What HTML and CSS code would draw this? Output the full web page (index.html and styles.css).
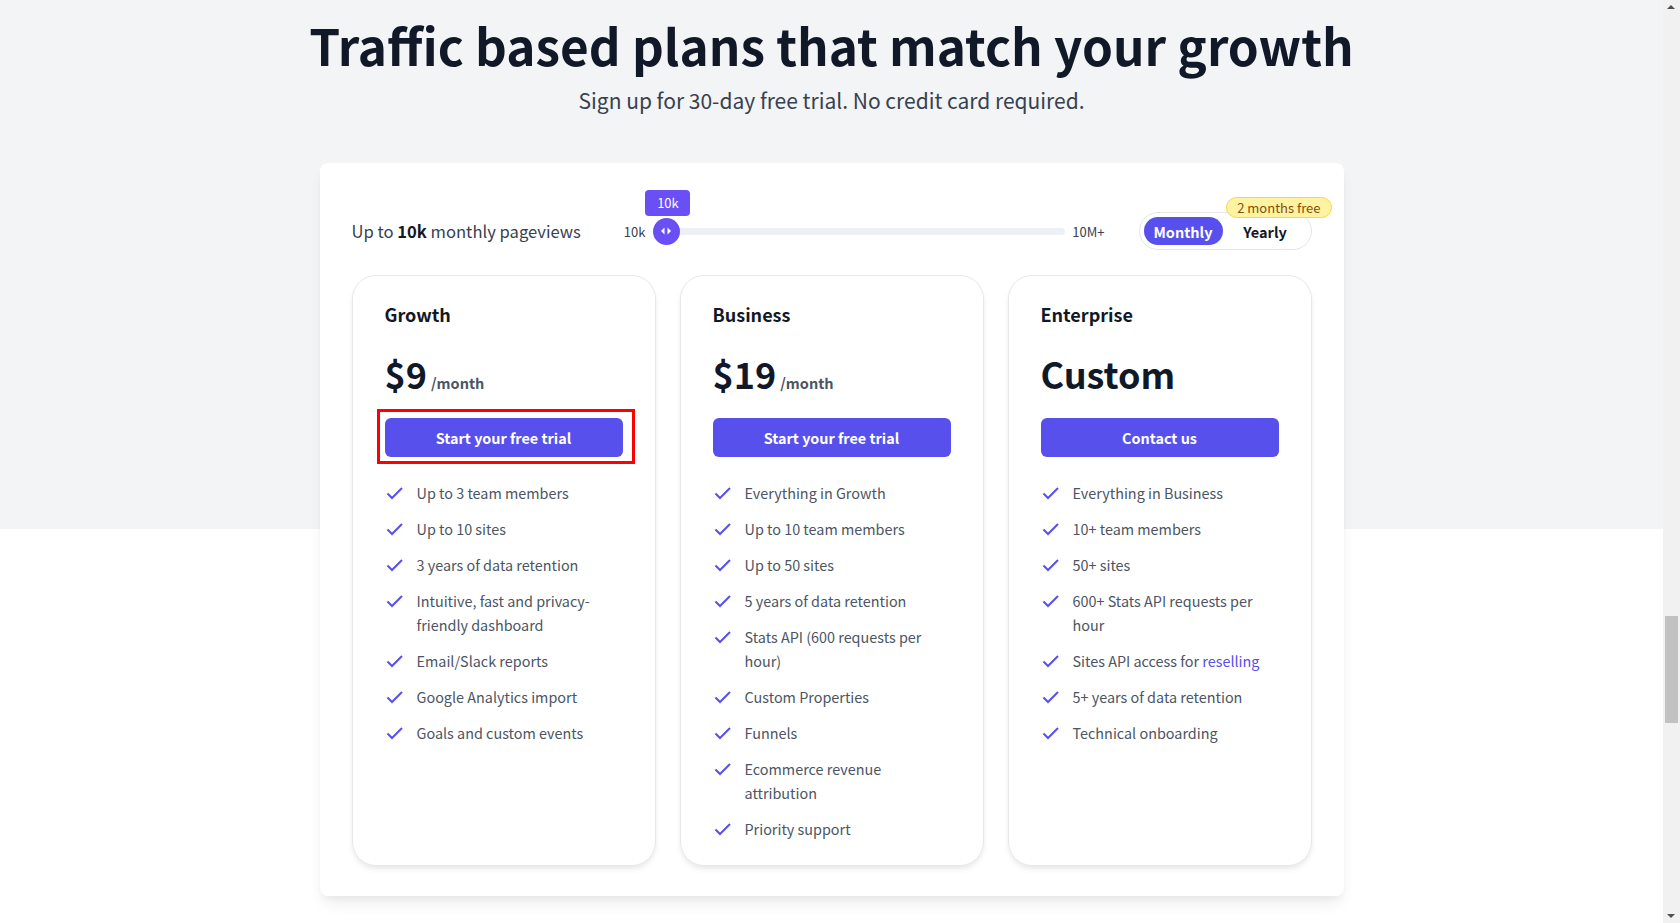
FILE: index.html
```html
<!DOCTYPE html>
<html lang="en">
<head>
    <meta charset="UTF-8">
    <meta name="viewport" content="width=device-width, initial-scale=1.0">
    <title>Pricing</title>
    <link rel="stylesheet" href="styles.css">
</head>
<body>
    <div class="page">
        <div class="hero">
            <h1>Traffic based plans that match your growth</h1>
            <p class="subtitle">Sign up for 30-day free trial. No credit card required.</p>
        </div>

        <div class="pricing">
            <!-- Pageviews slider and billing toggle -->
            <div class="controls">
                <div class="pageviews">Up to <b>10k</b> monthly pageviews</div>
                <div class="slider">
                    <span class="slider-label">10k</span>
                    <div class="track">
                        <div class="tooltip">10k</div>
                        <div class="thumb">
                            <svg width="26" height="26" viewBox="0 0 26 26">
                                <polygon points="8,13 11.5,9.5 11.5,16.5" fill="#fff"/>
                                <polygon points="14.5,9.5 18,13 14.5,16.5" fill="#fff"/>
                            </svg>
                        </div>
                    </div>
                    <span class="slider-label">10M+</span>
                </div>
                <div class="toggle">
                    <span class="badge">2 months free</span>
                    <button class="toggle-option active">Monthly</button>
                    <button class="toggle-option">Yearly</button>
                </div>
            </div>

            <div class="plans">
                <div class="plan">
                    <h3>Growth</h3>
                    <div class="price"><span class="amount">$9</span><span class="period">/month</span></div>
                    <div class="cta highlighted">
                        <button class="plan-button">Start your free trial</button>
                    </div>
                    <ul class="features">
                        <li><svg class="check" viewBox="0 0 20 20"><path d="M2.5 10.5l4.5 4.5L17 5"/></svg><span>Up to 3 team members</span></li>
                        <li><svg class="check" viewBox="0 0 20 20"><path d="M2.5 10.5l4.5 4.5L17 5"/></svg><span>Up to 10 sites</span></li>
                        <li><svg class="check" viewBox="0 0 20 20"><path d="M2.5 10.5l4.5 4.5L17 5"/></svg><span>3 years of data retention</span></li>
                        <li><svg class="check" viewBox="0 0 20 20"><path d="M2.5 10.5l4.5 4.5L17 5"/></svg><span>Intuitive, fast and privacy-friendly dashboard</span></li>
                        <li><svg class="check" viewBox="0 0 20 20"><path d="M2.5 10.5l4.5 4.5L17 5"/></svg><span>Email/Slack reports</span></li>
                        <li><svg class="check" viewBox="0 0 20 20"><path d="M2.5 10.5l4.5 4.5L17 5"/></svg><span>Google Analytics import</span></li>
                        <li><svg class="check" viewBox="0 0 20 20"><path d="M2.5 10.5l4.5 4.5L17 5"/></svg><span>Goals and custom events</span></li>
                    </ul>
                </div>

                <div class="plan">
                    <h3>Business</h3>
                    <div class="price"><span class="amount">$19</span><span class="period">/month</span></div>
                    <div class="cta">
                        <button class="plan-button">Start your free trial</button>
                    </div>
                    <ul class="features">
                        <li><svg class="check" viewBox="0 0 20 20"><path d="M2.5 10.5l4.5 4.5L17 5"/></svg><span>Everything in Growth</span></li>
                        <li><svg class="check" viewBox="0 0 20 20"><path d="M2.5 10.5l4.5 4.5L17 5"/></svg><span>Up to 10 team members</span></li>
                        <li><svg class="check" viewBox="0 0 20 20"><path d="M2.5 10.5l4.5 4.5L17 5"/></svg><span>Up to 50 sites</span></li>
                        <li><svg class="check" viewBox="0 0 20 20"><path d="M2.5 10.5l4.5 4.5L17 5"/></svg><span>5 years of data retention</span></li>
                        <li><svg class="check" viewBox="0 0 20 20"><path d="M2.5 10.5l4.5 4.5L17 5"/></svg><span>Stats API (600 requests per hour)</span></li>
                        <li><svg class="check" viewBox="0 0 20 20"><path d="M2.5 10.5l4.5 4.5L17 5"/></svg><span>Custom Properties</span></li>
                        <li><svg class="check" viewBox="0 0 20 20"><path d="M2.5 10.5l4.5 4.5L17 5"/></svg><span>Funnels</span></li>
                        <li><svg class="check" viewBox="0 0 20 20"><path d="M2.5 10.5l4.5 4.5L17 5"/></svg><span>Ecommerce revenue attribution</span></li>
                        <li><svg class="check" viewBox="0 0 20 20"><path d="M2.5 10.5l4.5 4.5L17 5"/></svg><span>Priority support</span></li>
                    </ul>
                </div>

                <div class="plan">
                    <h3>Enterprise</h3>
                    <div class="price"><span class="amount">Custom</span></div>
                    <div class="cta">
                        <button class="plan-button">Contact us</button>
                    </div>
                    <ul class="features">
                        <li><svg class="check" viewBox="0 0 20 20"><path d="M2.5 10.5l4.5 4.5L17 5"/></svg><span>Everything in Business</span></li>
                        <li><svg class="check" viewBox="0 0 20 20"><path d="M2.5 10.5l4.5 4.5L17 5"/></svg><span>10+ team members</span></li>
                        <li><svg class="check" viewBox="0 0 20 20"><path d="M2.5 10.5l4.5 4.5L17 5"/></svg><span>50+ sites</span></li>
                        <li><svg class="check" viewBox="0 0 20 20"><path d="M2.5 10.5l4.5 4.5L17 5"/></svg><span>600+ Stats API requests per hour</span></li>
                        <li><svg class="check" viewBox="0 0 20 20"><path d="M2.5 10.5l4.5 4.5L17 5"/></svg><span>Sites API access for <a href="#">reselling</a></span></li>
                        <li><svg class="check" viewBox="0 0 20 20"><path d="M2.5 10.5l4.5 4.5L17 5"/></svg><span>5+ years of data retention</span></li>
                        <li><svg class="check" viewBox="0 0 20 20"><path d="M2.5 10.5l4.5 4.5L17 5"/></svg><span>Technical onboarding</span></li>
                    </ul>
                </div>
            </div>
        </div>
    </div>

    <!-- Window scrollbar -->
    <div class="scrollbar">
        <span class="arrow up"></span>
        <div class="scroll-thumb"></div>
        <span class="arrow down"></span>
    </div>
</body>
</html>
```

FILE: styles.css
```css
body {
    margin: 0;
    background-color: #ffffff;
    font-family: "Noto Sans CJK SC", "Noto Sans", sans-serif;
    color: #111827;
    overflow: hidden;
}
.page {
    width: calc(100% - 17px);
    height: 100vh;
    background: linear-gradient(#f3f4f6 529px, #ffffff 529px);
}
.hero {
    text-align: center;
    padding-top: 15px;
}
.hero h1 {
    margin: 0;
    font-size: 49.5px;
    line-height: 60px;
    font-weight: 700;
    color: #111827;
}
.subtitle {
    margin: 11px 0 0;
    font-size: 21px;
    line-height: 28px;
    color: #374151;
}
.pricing {
    width: 1024px;
    box-sizing: border-box;
    margin: 49px auto 0;
    padding: 49px 32px 30px;
    background-color: #ffffff;
    border-radius: 8px;
    box-shadow: 0 10px 15px -3px rgba(0, 0, 0, 0.08), 0 4px 6px -2px rgba(0, 0, 0, 0.04);
}
.controls {
    display: flex;
    align-items: center;
    height: 38px;
}
.pageviews {
    font-size: 16.6px;
    color: #374151;
}
.pageviews b {
    color: #111827;
}
.slider {
    flex: 1;
    display: flex;
    align-items: center;
    margin: 0 34px 0 43px;
}
.slider-label {
    font-size: 13px;
    color: #374151;
}
.track {
    flex: 1;
    position: relative;
    height: 7px;
    margin: 0 7px 0 9px;
    background-color: #edf0f4;
    border-radius: 4px;
}
.thumb {
    position: absolute;
    left: -1px;
    top: -10px;
    width: 27px;
    height: 27px;
    border-radius: 50%;
    background-color: #6a4ff5;
}
.thumb svg {
    display: block;
}
.tooltip {
    position: absolute;
    left: -9px;
    bottom: 19px;
    width: 45px;
    height: 26px;
    line-height: 26px;
    text-align: center;
    font-size: 13px;
    color: #ffffff;
    background-color: #6a4ff5;
    border-radius: 4px;
}
.toggle {
    position: relative;
    display: flex;
    height: 38px;
    box-sizing: border-box;
    padding: 4px 3px 4px 4px;
    border: 1px solid #e5e7eb;
    border-radius: 999px;
    background-color: #ffffff;
}
.toggle-option {
    width: 85px;
    border: none;
    background: none;
    padding: 0;
    font-family: inherit;
    font-size: 14.5px;
    font-weight: 700;
    color: #111827;
    border-radius: 999px;
}
.toggle-option.active {
    width: 79px;
    background-color: #5850ec;
    color: #ffffff;
}
.badge {
    position: absolute;
    top: -16px;
    right: -21px;
    padding: 0 10px;
    height: 21px;
    line-height: 19px;
    box-sizing: border-box;
    font-size: 13px;
    color: #854d0e;
    background-color: #fef3a0;
    border: 1px solid #fcd34d;
    border-radius: 999px;
}
.plans {
    display: grid;
    grid-template-columns: repeat(3, 1fr);
    gap: 24px;
    margin-top: 25px;
}
.plan {
    padding: 24px 32px;
    border: 1px solid #e5e7eb;
    border-radius: 24px;
    box-shadow: 0 4px 6px -1px rgba(0, 0, 0, 0.08), 0 2px 4px -1px rgba(0, 0, 0, 0.04);
}
.plan h3 {
    margin: 0;
    font-size: 18px;
    line-height: 28px;
    font-weight: 700;
}
.price {
    display: flex;
    align-items: baseline;
    margin-top: 25px;
    height: 40px;
}
.amount {
    font-size: 36px;
    line-height: 40px;
    font-weight: 700;
}
.period {
    margin-left: 4px;
    font-size: 14.5px;
    font-weight: 700;
    color: #4b5563;
}
.cta {
    position: relative;
    margin-top: 25px;
}
.cta.highlighted::after {
    content: "";
    position: absolute;
    top: -9px;
    left: -8px;
    right: -12px;
    bottom: -7px;
    border: 3px solid #ff0000;
}
.plan-button {
    display: block;
    width: 100%;
    height: 39px;
    border: none;
    border-radius: 6px;
    background-color: #5850ec;
    color: #ffffff;
    font-family: inherit;
    font-size: 14.4px;
    font-weight: 700;
}
.features {
    list-style: none;
    margin: 24px 0 0;
    padding: 0;
    display: flex;
    flex-direction: column;
    gap: 12px;
}
.features li {
    display: flex;
    align-items: flex-start;
    font-size: 14.4px;
    line-height: 24px;
    color: #4b5563;
}
.check {
    flex-shrink: 0;
    width: 20px;
    height: 20px;
    margin: 2px 12px 0 0;
    fill: none;
    stroke: #5850ec;
    stroke-width: 2;
}
.features a {
    color: #5850ec;
    text-decoration: none;
}
.scrollbar {
    position: fixed;
    top: 0;
    right: 0;
    width: 17px;
    height: 100vh;
    background-color: #f1f1f1;
}
.scroll-thumb {
    position: absolute;
    top: 616px;
    left: 2px;
    width: 13px;
    height: 107px;
    background-color: #c1c1c1;
}
.arrow {
    position: absolute;
    left: 4px;
    width: 0;
    height: 0;
    border-left: 4px solid transparent;
    border-right: 4px solid transparent;
}
.arrow.up {
    top: 5px;
    border-bottom: 4px solid #505050;
}
.arrow.down {
    bottom: 5px;
    border-top: 4px solid #505050;
}
```
